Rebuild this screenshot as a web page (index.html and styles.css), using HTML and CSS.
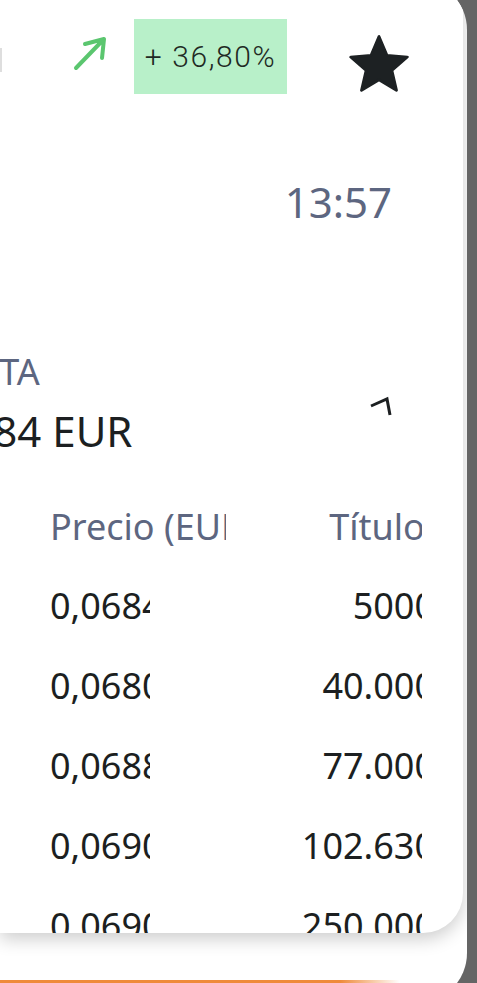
FILE: index.html
```html
<!DOCTYPE html>
<html lang="es">
<head>
  <meta charset="UTF-8">
  <title>Cotización</title>
  <link rel="stylesheet" href="styles.css">
</head>
<body>
  <div class="panel">
    <div class="card">
      <div class="top-row">
        <span class="cut"></span>
        <svg class="trend" width="36" height="36" viewBox="0 0 36 36">
          <path d="M4 33 L32 4 M13 9 L32 4 L30 23" />
        </svg>
        <div class="badge">+ 36,80%</div>
        <svg class="star" width="60" height="58" viewBox="1.4 1.6 21.2 20.2">
          <path d="M12 17.27L18.18 21l-1.64-7.03L22 9.24l-7.19-.61L12 2 9.19 8.63 2 9.24l5.46 4.73L5.82 21z" />
        </svg>
      </div>

      <div class="time">13:57</div>

      <div class="summary">
        <div class="summary-text">
          <div class="label">OFERTA</div>
          <div class="value">0,0684 EUR</div>
        </div>
        <svg class="toggle" width="26" height="20" viewBox="0 0 26 20">
          <path d="M3 10 L19 3 L22 19" />
        </svg>
      </div>

      <div class="book">
        <div class="row head">
          <div class="price wide">Precio (EUR)</div>
          <div class="qty"><span>Títulos</span></div>
        </div>
        <div class="row">
          <div class="price">0,0684</div>
          <div class="qty"><span>5000</span></div>
        </div>
        <div class="row">
          <div class="price">0,0680</div>
          <div class="qty"><span>40.000</span></div>
        </div>
        <div class="row">
          <div class="price">0,0688</div>
          <div class="qty"><span>77.000</span></div>
        </div>
        <div class="row">
          <div class="price">0,0690</div>
          <div class="qty"><span>102.630</span></div>
        </div>
        <div class="row">
          <div class="price">0,0690</div>
          <div class="qty"><span>250.000</span></div>
        </div>
      </div>
    </div>
    <div class="accent"></div>
  </div>
</body>
</html>
```

FILE: styles.css
```css
body {
  margin: 0;
  height: 983px;
  overflow: hidden;
  background: #656565;
  font-family: "Noto Sans", "Open Sans", sans-serif;
  color: #1c1f21;
}

.panel {
  width: 467px;
  height: 1023px;
  margin-top: -20px;
  background: #fff;
  border-radius: 0 50px 50px 0;
  display: flex;
  flex-direction: column;
  overflow: hidden;
}

.card {
  width: 463px;
  height: 953px;
  padding-top: 20px;
  box-sizing: border-box;
  background: #fff;
  border-bottom-right-radius: 40px;
  box-shadow: 0 6px 18px rgba(0, 0, 0, 0.2);
  overflow: hidden;
  flex-shrink: 0;
}

/* fila de arriba: flecha, variacion y favorito */
.top-row {
  display: flex;
  align-items: flex-start;
  height: 75px;
  margin-top: 19px;
}

.cut {
  width: 2px;
  height: 24px;
  margin-top: 29px;
  background: #dedede;
}

.trend {
  margin-left: 70px;
  margin-top: 16px;
  fill: none;
  stroke: #5bc66f;
  stroke-width: 4;
  stroke-linecap: round;
  stroke-linejoin: round;
}

.badge {
  margin-left: 26px;
  width: 153px;
  height: 75px;
  background: #b8f0c9;
  display: flex;
  align-items: center;
  justify-content: center;
  font-family: Roboto, "Noto Sans", sans-serif;
  font-weight: 300;
  font-size: 30px;
  letter-spacing: 1.6px;
  color: #1f2a24;
}

.star {
  margin-left: 62px;
  margin-top: 16px;
  fill: #1d2123;
  stroke: #1d2123;
  stroke-width: 1;
  stroke-linejoin: round;
}

.time {
  margin-top: 79px;
  padding-right: 71px;
  text-align: right;
  font-size: 42px;
  color: #5d6680;
}

.summary {
  margin-top: 117px;
  display: flex;
  justify-content: space-between;
  align-items: flex-start;
  padding-right: 69px;
}

.summary-text {
  margin-left: -90px;
}

.label {
  font-size: 36px;
  color: #5d6680;
}

.value {
  margin-top: 6px;
  font-size: 42px;
}

.toggle {
  margin-top: 49px;
  fill: none;
  stroke: #1c1f21;
  stroke-width: 3;
}

/* libro de ordenes */
.book {
  margin-top: 29px;
  padding: 0 41px 0 50px;
}

.row {
  display: flex;
  justify-content: space-between;
  height: 80px;
  line-height: 80px;
  font-size: 36px;
  white-space: nowrap;
}

.row.head {
  height: 78px;
  line-height: 78px;
  color: #5d6680;
}

.price {
  width: 100px;
  overflow: hidden;
}

.price.wide {
  width: 176px;
}

.qty {
  width: 172px;
  overflow: hidden;
  text-align: right;
}

.qty span {
  display: inline-block;
  margin-right: -13px;
}

.head .qty span {
  margin-right: -20px;
}

.accent {
  margin-top: auto;
  margin-bottom: 20px;
  width: 400px;
  height: 3px;
  background: linear-gradient(to right, #ef8a3a 85%, rgba(239, 138, 58, 0));
}
```
